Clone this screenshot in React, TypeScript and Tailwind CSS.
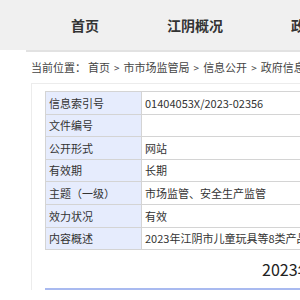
import React from "react";

const rows: [string, string][] = [
  ["信息索引号", "01404053X/2023-02356"],
  ["文件编号", ""],
  ["公开形式", "网站"],
  ["有效期", "长期"],
  ["主题（一级）", "市场监管、安全生产监管"],
  ["效力状况", "有效"],
  ["内容概述", "2023年江阴市儿童玩具等8类产品质量监督抽查结果公告"],
];

const crumbs = ["首页", "市市场监管局", "信息公开", "政府信息公开"];

const font = { fontFamily: '"Noto Sans CJK SC", "Noto Sans", sans-serif' };

export default function App() {
  return (
    <div className="w-[300px] h-[300px] overflow-hidden bg-white text-[#333]" style={font}>
      <div className="h-[50px] bg-[#f0f0f0] flex items-center pl-[37px] whitespace-nowrap">
        {["首页", "江阴概况", "政务公开", "政务服务"].map((t) => (
          <div key={t} className="px-[34px] text-[14px] font-bold text-[#333] leading-none shrink-0">
            {t}
          </div>
        ))}
      </div>
      <div className="ml-[26px] w-[600px] border-t-2 border-[#e2e2e2]">
        <div className="h-[31px] flex items-center pl-[5px] text-[11px] text-[#444] whitespace-nowrap">
          <span className="mr-[2px]">当前位置：</span>
          {crumbs.map((c, i) => (
            <React.Fragment key={c}>
              {i > 0 && <span className="mx-[4px] text-[10px]">&gt;</span>}
              <span>{c}</span>
            </React.Fragment>
          ))}
        </div>
        <div className="ml-[5px] border-l border-t border-[#ececec] pt-[7px] pl-[13px]">
          <table className="border-collapse text-[11px] w-[560px]">
            <tbody>
              {rows.map(([k, v]) => (
                <tr key={k} className="h-[22.6px]">
                  <td className="w-[96px] bg-[#e6ecfd] border border-[#d4d4d4] px-[3px] whitespace-nowrap">{k}</td>
                  <td className="border border-[#d4d4d4] px-[3px] whitespace-nowrap">{v}</td>
                </tr>
              ))}
            </tbody>
          </table>
          <div className="h-[38px] flex items-center pl-[217px] text-[16px] text-[#222] whitespace-nowrap">
            2023年江阴市儿童玩具等8类产品质量监督抽查结果公告
          </div>
          <div className="h-[2px] w-[560px] bg-[#a9baf0]" />
        </div>
      </div>
    </div>
  );
}
